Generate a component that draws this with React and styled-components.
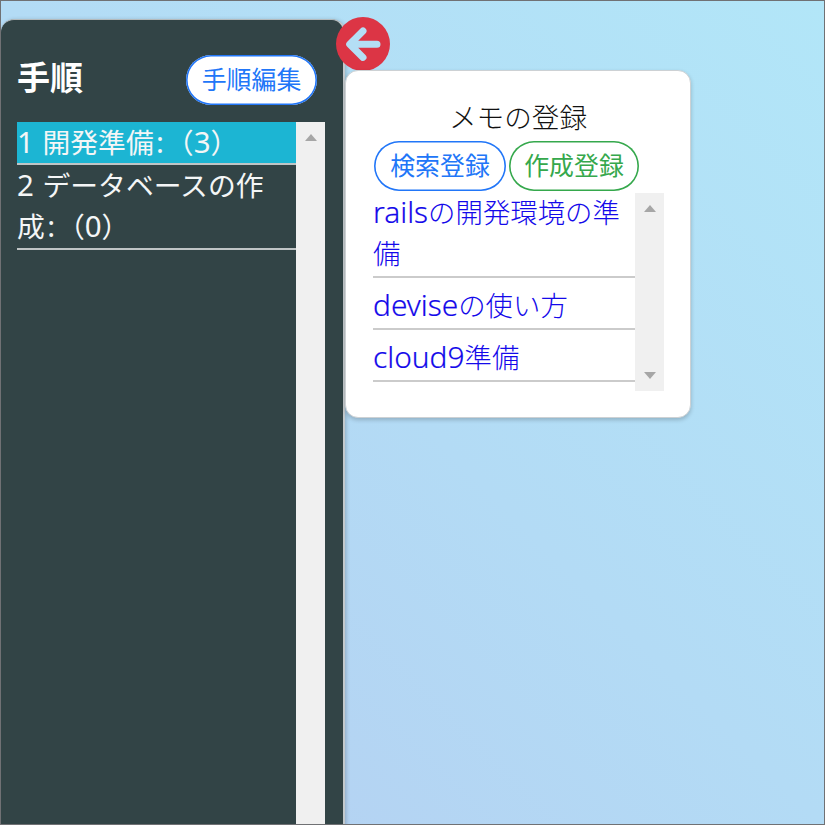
import React from 'react';
import styled, { createGlobalStyle } from 'styled-components';

const GlobalStyle = createGlobalStyle`
  * { box-sizing: border-box; }
  body {
    margin: 0;
    overflow: hidden;
    font-family: "Noto Sans", "Noto Sans CJK JP", sans-serif;
    font-size: 27.4px;
    line-height: 42px;
  }
`;

const Page = styled.main`
  display: flex;
  align-items: flex-start;
  width: 825px;
  height: 825px;
  padding-top: 18px;
  overflow: hidden;
  border: 1px solid #707174;
  background: linear-gradient(45deg, #b5cef1 0%, #b3dbf5 50%, #b2e6f8 100%);
`;

const Sidebar = styled.aside`
  flex: none;
  width: 344px;
  height: 840px;
  padding: 35px 17px 0 16px;
  border-top: 1px solid #b4babc;
  border-right: 2px solid #c3c9cc;
  border-radius: 13px 13px 0 0;
  background: #324446;
  box-shadow: 1px 1px 4px rgba(0, 0, 0, 0.22);
`;

const SidebarHeader = styled.header`
  display: flex;
  align-items: flex-start;
  justify-content: space-between;
  height: 67px;
  padding-right: 9px;
`;

const Title = styled.h1`
  margin: 1px 0 0;
  color: #fff;
  font-size: 33px;
  font-weight: 700;
  line-height: 44px;
`;

const tones = { blue: '#2176f8', green: '#35a84c' };

const PillButton = styled.button`
  flex: none;
  width: ${({ $width }) => $width}px;
  height: 50px;
  padding: 0 0 1px;
  border: 0;
  border-radius: 25px;
  background: #fff;
  box-shadow: inset 0 0 0 1.6px ${({ $tone }) => tones[$tone]};
  color: ${({ $tone }) => tones[$tone]};
  font-family: inherit;
  font-size: 24.9px;
  line-height: 47px;
  white-space: nowrap;
`;

const ScrollArea = styled.div`
  display: flex;
  width: ${({ $width }) => $width}px;
  height: ${({ $height }) => $height}px;
`;

const List = styled.ul`
  flex: 1;
  min-width: 0;
  margin: 0;
  padding: 0;
  list-style: none;
`;

const MemoList = styled(List)`
  margin-top: -1px;
`;

const Step = styled.li`
  height: ${({ $lines }) => ($lines === 1 ? 43 : 85)}px;
  border-bottom: 2px solid #c0c5c6;
  background: ${({ $active }) => ($active ? '#1cb5d3' : 'transparent')};
  color: #f4f6f6;
  font-size: 27.8px;
  line-height: 41px;
  word-spacing: 1px;
`;

const Latin = styled.span`
  font-size: 1.06em;
  line-height: 0;
`;

const Colon = styled.span`
  padding: 0 1.8px 0 2.4px;
  font-size: 1.06em;
  line-height: 0;
`;

const Scrollbar = styled.div`
  display: flex;
  flex: none;
  flex-direction: column;
  align-items: center;
  justify-content: space-between;
  width: 29px;
  padding: 12px 0;
  background: #f0f0f0;
`;

const Caret = styled.span`
  width: 0;
  height: 0;
  border-right: 6.5px solid transparent;
  border-left: 6.5px solid transparent;
  border-${({ $down }) => ($down ? 'top' : 'bottom')}: 7px solid #a6a6a6;
`;

const Content = styled.section`
  position: relative;
  flex: none;
  width: 346px;
  margin-top: 51px;
`;

const BackButton = styled.button`
  position: absolute;
  top: -53px;
  left: -9.5px;
  display: flex;
  padding: 0;
  border: 0;
  background: transparent;
`;

const Card = styled.div`
  position: relative;
  height: 348px;
  padding: 25px 27px 0;
  border: 1px solid #cdd1d4;
  border-radius: 13px;
  background: #fff;
  box-shadow: 0 2px 4px rgba(0, 0, 0, 0.2);
`;

const CardTitle = styled.h2`
  margin: 0;
  color: #111;
  font-size: 27.6px;
  font-weight: 300;
  line-height: 42px;
  text-align: center;
`;

const Actions = styled.div`
  display: flex;
  gap: 3px;
  height: 55px;
  padding: 3px 0 0 1px;
`;

const Memo = styled.li`
  height: 52px;
  border-bottom: 2px solid #cbcbcb;
  color: #1409ea;
  font-weight: 300;
  line-height: 41px;

  &:first-child {
    height: 86px;
  }

  & + & {
    padding-top: 7px;
  }
`;

const MemoLatin = styled(Latin)`
  font-size: 1.09em;
  -webkit-text-stroke: 0.2px currentColor;
`;

function BackIcon() {
  return (
    <svg width="54" height="54" viewBox="0 0 54 54" fill="none">
      <circle cx="27" cy="27" r="27" fill="#dc3545" />
      <path
        d="M27 14 13.7 27.2 27 40.4M14.2 27.2H41"
        stroke="#b4def5"
        strokeWidth="7"
        strokeLinecap="round"
        strokeLinejoin="round"
      />
    </svg>
  );
}

export default function App() {
  return (
    <>
      <GlobalStyle />
      <Page>
        <Sidebar>
          <SidebarHeader>
            <Title>手順</Title>
            <PillButton $tone="blue" $width={131}>手順編集</PillButton>
          </SidebarHeader>
          <ScrollArea $width={308} $height={720}>
            <List>
              <Step $active $lines={1}>
                <Latin>1 </Latin>開発準備<Colon>:</Colon>（<Latin>3</Latin>）
              </Step>
              <Step $lines={2}>
                <Latin>2 </Latin>データベースの作成<Colon>:</Colon>（<Latin>0</Latin>）
              </Step>
            </List>
            <Scrollbar><Caret /></Scrollbar>
          </ScrollArea>
        </Sidebar>
        <Content>
          <BackButton aria-label="戻る"><BackIcon /></BackButton>
          <Card>
            <CardTitle>メモの登録</CardTitle>
            <Actions>
              <PillButton $tone="blue" $width={132}>検索登録</PillButton>
              <PillButton $tone="green" $width={130}>作成登録</PillButton>
            </Actions>
            <ScrollArea $width={291} $height={198}>
              <MemoList>
                <Memo><MemoLatin>rails</MemoLatin>の開発環境の準備</Memo>
                <Memo><MemoLatin>devise</MemoLatin>の使い方</Memo>
                <Memo><MemoLatin>cloud9</MemoLatin>準備</Memo>
              </MemoList>
              <Scrollbar><Caret /><Caret $down /></Scrollbar>
            </ScrollArea>
          </Card>
        </Content>
      </Page>
    </>
  );
}
